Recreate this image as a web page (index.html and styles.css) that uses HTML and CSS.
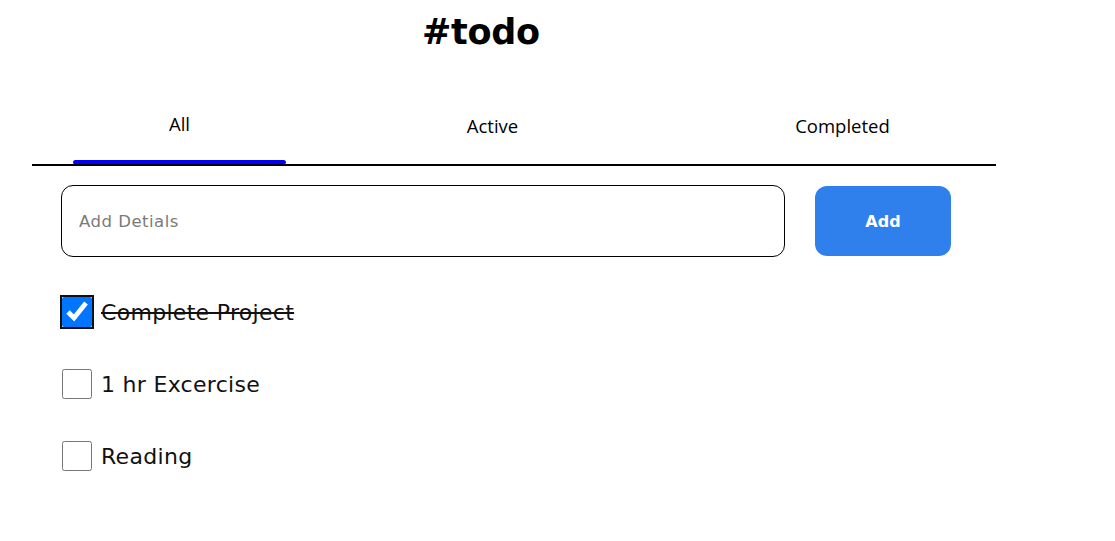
FILE: index.html
```html
<!DOCTYPE html>
<html>
<head>
<meta charset="utf-8">
<link rel="stylesheet" href="styles.css">
</head>
<body>
<div class="app">
  <h1 class="title">#todo</h1>
  <nav class="tabs">
    <div class="tab tab-all active">All</div>
    <div class="tab tab-active">Active</div>
    <div class="tab tab-completed">Completed</div>
  </nav>
  <form class="add-row">
    <input class="details" type="text" placeholder="Add Detials">
    <button class="add-btn" type="button">Add</button>
  </form>
  <ul class="list">
    <li class="item done">
      <input type="checkbox" class="check focused" checked>
      <span class="label">Complete Project</span>
    </li>
    <li class="item">
      <input type="checkbox" class="check">
      <span class="label">1 hr Excercise</span>
    </li>
    <li class="item">
      <input type="checkbox" class="check">
      <span class="label">Reading</span>
    </li>
  </ul>
</div>
</body>
</html>
```
FILE: styles.css
```css
* { box-sizing: border-box; }
body {
  margin: 0;
  background: #fff;
  font-family: "DejaVu Sans", "Noto Sans", sans-serif;
  color: #000;
}
.app {
  width: 964px;
  margin-left: 32px;
}
.title {
  margin: 0;
  padding-top: 8px;
  padding-left: 390px;
  font-size: 35px;
  font-weight: 700;
  line-height: 48px;
  letter-spacing: -0.3px;
}
.tabs {
  display: flex;
  margin-top: 49px;
  border-bottom: 2px solid #000;
  font-family: "Open Sans", "Noto Sans", sans-serif;
  font-size: 18.5px;
  line-height: 24px;
}
.tab {
  height: 59px;
  padding-top: 9px;
  text-align: center;
  position: relative;
}
.tab-all { margin-left: 41px; width: 213px; padding-top: 7px; }
.tab-active { margin-left: 100px; width: 213px; }
.tab-completed { margin-left: 137px; width: 213px; }
.tab.active::after {
  content: "";
  position: absolute;
  left: 0;
  right: 0;
  bottom: 0;
  height: 4px;
  background: #0000f5;
  border-radius: 3px 3px 2px 2px;
}
.add-row {
  display: flex;
  align-items: center;
  margin: 19px 0 0 29px;
  gap: 30px;
}
.details {
  width: 724px;
  height: 72px;
  border: 1px solid #000;
  border-radius: 12px;
  padding: 0 17px;
  font-family: "DejaVu Sans", sans-serif;
  font-size: 16.5px;
  letter-spacing: 0.5px;
  outline: none;
}
.details::placeholder { color: #7a7a7a; }
.add-btn {
  width: 136px;
  height: 70px;
  border: none;
  border-radius: 12px;
  background: #2f80ed;
  color: #fff;
  font-family: "DejaVu Sans", sans-serif;
  font-weight: 700;
  font-size: 16px;
}
.list {
  list-style: none;
  margin: 38px 0 0 29px;
  padding: 0;
}
.item {
  display: flex;
  align-items: center;
  gap: 9px;
  height: 34px;
  margin-bottom: 38px;
  font-size: 22px;
  letter-spacing: 0.3px;
}
.check {
  width: 30px;
  height: 30px;
  margin: 0 0 0 1px;
  accent-color: #0075ff;
}
.check.focused {
  outline: 2px solid #101010;
  outline-offset: 0;
  border-radius: 3px;
}
.done .label { text-decoration: line-through; }
.label { color: #111; }
```
